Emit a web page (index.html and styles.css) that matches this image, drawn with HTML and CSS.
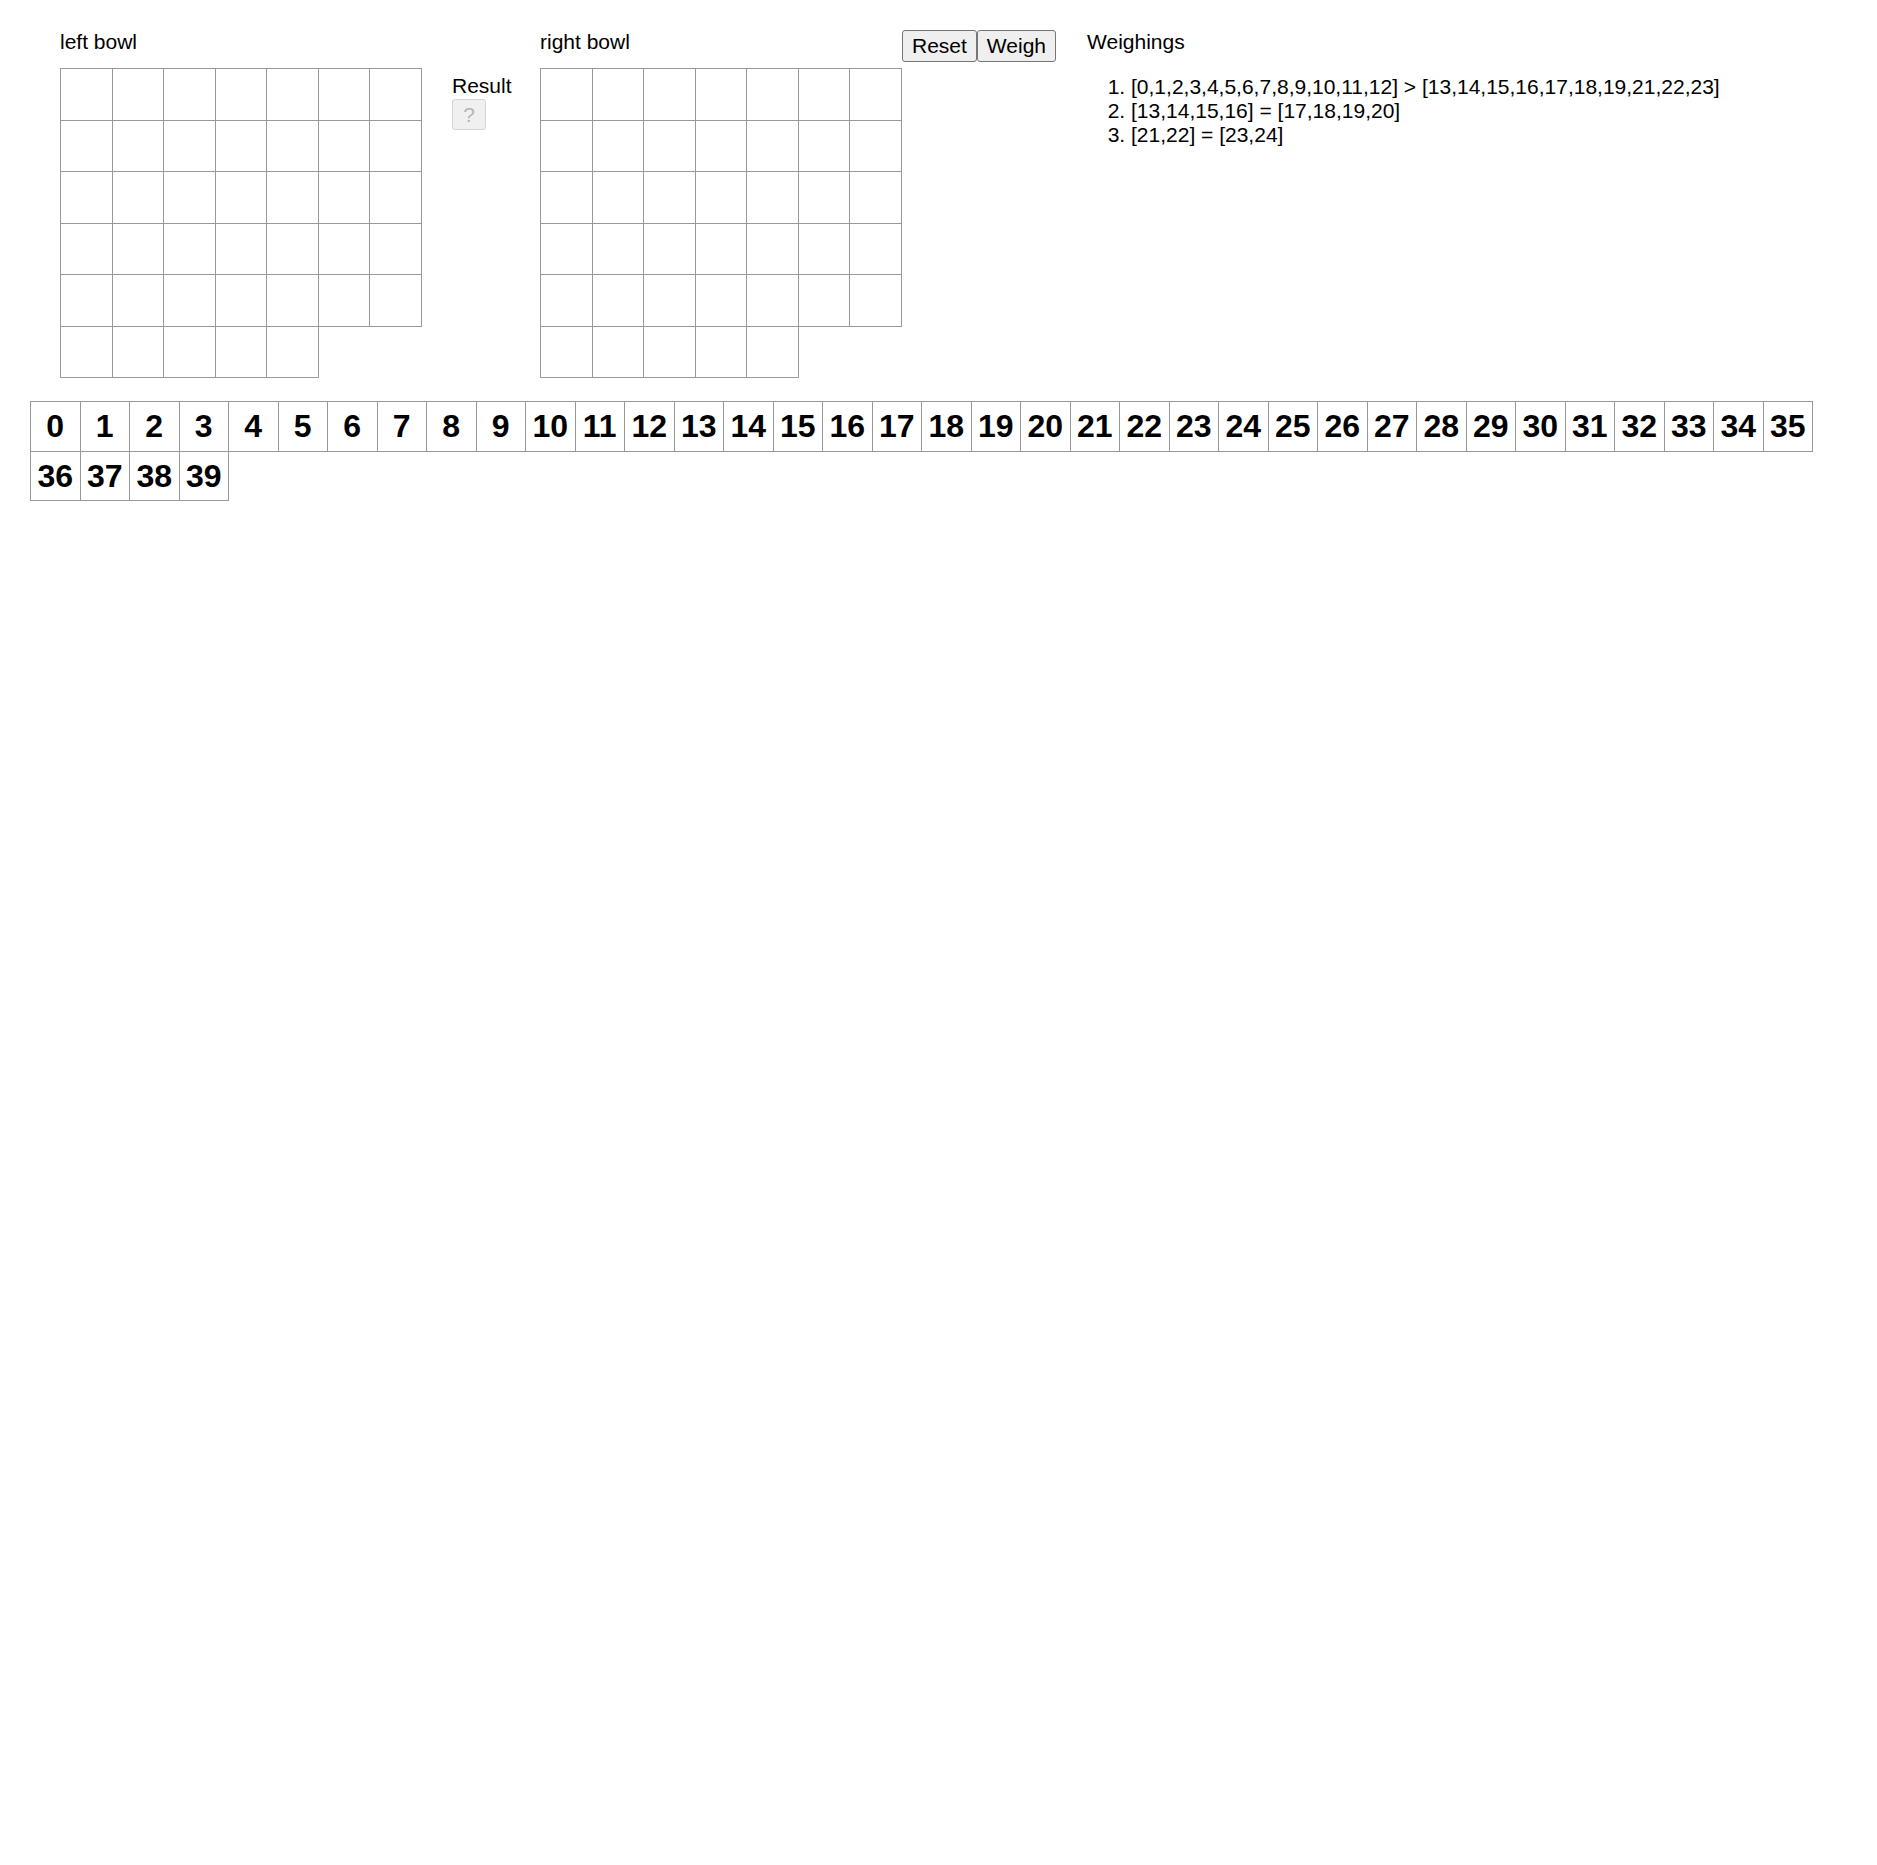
FILE: index.html
```html
<!DOCTYPE html>
<html>
<head>
<meta charset="utf-8">
<title>Weighing</title>
<link rel="stylesheet" href="styles.css">
</head>
<body>
<div class="top">
  <div class="bowl">
    <div class="label">left bowl</div>
    <div class="grid" id="left"></div>
  </div>
  <div class="result">
    <div class="label">Result</div>
    <button class="qbtn" disabled>?</button>
  </div>
  <div class="bowl">
    <div class="label">right bowl</div>
    <div class="grid" id="right"></div>
  </div>
  <div class="actions">
    <button class="btn">Reset</button><button class="btn">Weigh</button>
  </div>
  <div class="weighings">
    <div class="label">Weighings</div>
    <ol class="list">
      <li>[0,1,2,3,4,5,6,7,8,9,10,11,12] &gt; [13,14,15,16,17,18,19,21,22,23]</li>
      <li>[13,14,15,16] = [17,18,19,20]</li>
      <li>[21,22] = [23,24]</li>
    </ol>
  </div>
</div>
<div class="coins" id="coins"></div>
<script src="app.js"></script>
</body>
</html>
```
FILE: styles.css
```css
html, body {
  margin: 0;
  padding: 0;
  background: #fff;
}
body {
  font-family: "Liberation Sans", Arial, sans-serif;
  font-size: 21px;
  line-height: 24px;
  color: #000;
}
.top {
  display: flex;
  align-items: flex-start;
  padding: 30px 0 0 60px;
}
.label {
  height: 24px;
  white-space: nowrap;
}
.bowl .label {
  margin-bottom: 14px;
}
.grid {
  display: flex;
  flex-wrap: wrap;
  align-content: flex-start;
  width: 361px;
  padding: 1px 0 0 1px;
}
.cell {
  box-sizing: border-box;
  width: 52.5px;
  height: 52.5px;
  border: 1px solid #999;
  margin: -1px 0 0 -1px;
  background: #fff;
}
.result {
  width: 88px;
  margin-left: 30px;
  padding-top: 44px;
}
.qbtn {
  display: block;
  margin-top: 1px;
  box-sizing: border-box;
  width: 34px;
  height: 31px;
  padding: 0;
  font-family: "Liberation Sans", Arial, sans-serif;
  font-size: 21px;
  color: #b5b5b5;
  background: #f0f0f0;
  border: 1px solid #d4d4d4;
  border-radius: 3px;
}
.actions {
  display: flex;
  margin-left: 0;
}
.btn {
  box-sizing: border-box;
  height: 32px;
  padding: 0 9px;
  font-family: "Liberation Sans", Arial, sans-serif;
  font-size: 21px;
  color: #000;
  background: #efefef;
  border: 1px solid #767676;
  border-radius: 3px;
}
.weighings {
  margin-left: 31px;
}
.list {
  margin: 21px 0 0 0;
  padding-left: 44px;
}
.list li {
  white-space: nowrap;
}
.coins {
  display: flex;
  flex-wrap: wrap;
  width: 1783px;
  padding: 1px 0 0 1px;
  margin: 23px 0 0 30px;
}
.coin {
  box-sizing: border-box;
  width: 50.5px;
  height: 50.5px;
  border: 1px solid #999;
  margin: -1px 0 0 -1px;
  display: flex;
  align-items: center;
  justify-content: center;
  font-weight: bold;
  font-size: 32px;
  line-height: 1;
}
```
FILE: app.js
```js
(function () {
  ['left', 'right'].forEach(function (id) {
    var g = document.getElementById(id);
    for (var i = 0; i < 40; i++) {
      var c = document.createElement('div');
      c.className = 'cell';
      g.appendChild(c);
    }
  });
  var coins = document.getElementById('coins');
  for (var n = 0; n < 40; n++) {
    var t = document.createElement('div');
    t.className = 'coin';
    t.textContent = n;
    coins.appendChild(t);
  }
})();
```
